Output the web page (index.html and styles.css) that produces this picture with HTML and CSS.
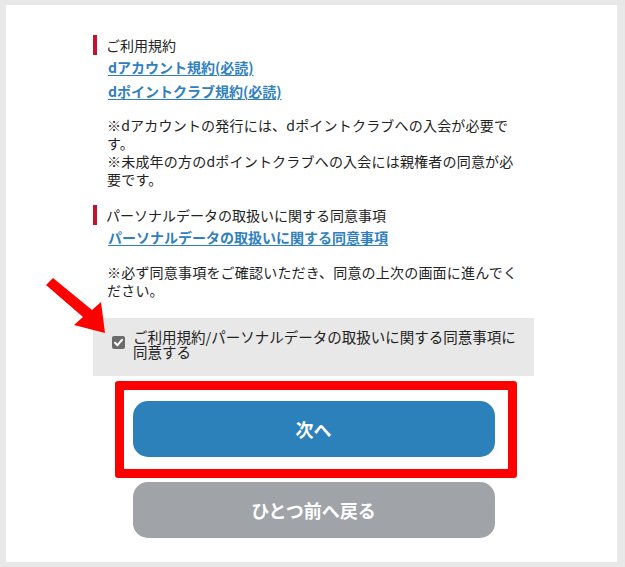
FILE: index.html
```html
<!DOCTYPE html>
<html lang="ja">
<head>
  <meta charset="UTF-8" />
  <meta name="viewport" content="width=device-width, initial-scale=1.0"/>
  <title>ご利用規約</title>
  <link rel="stylesheet" href="styles.css">
</head>
<body>

  <div class="card">
    <div class="content">
      <div class="section">
        <h3 class="heading">ご利用規約</h3>
        <div class="links">
          <a href="#">dアカウント規約(必読)</a>
          <a href="#">dポイントクラブ規約(必読)</a>
        </div>
        <p class="note">※dアカウントの発行には、dポイントクラブへの入会が必要で<br>す。<br>※未成年の方のdポイントクラブへの入会には親権者の同意が必<br>要です。</p>
      </div>

      <div class="section">
        <h3 class="heading">パーソナルデータの取扱いに関する同意事項</h3>
        <div class="links">
          <a href="#">パーソナルデータの取扱いに関する同意事項</a>
        </div>
        <p class="note note-last">※必ず同意事項をご確認いただき、同意の上次の画面に進んでく<br>ださい。</p>
      </div>

      <label class="agree">
        <span class="check">
          <svg width="13" height="13" viewBox="0 0 13 13">
            <rect x="0" y="0" width="13" height="13" rx="2" fill="#6b6b6b"/>
            <path d="M3 6.8 L5.5 9.2 L10 3.8" fill="none" stroke="#fff" stroke-width="2" stroke-linecap="round" stroke-linejoin="round"/>
          </svg>
        </span>
        <span class="agree-text">ご利用規約/パーソナルデータの取扱いに関する同意事項に<br>同意する</span>
      </label>

      <div class="actions">
        <button class="btn btn-next">次へ<span class="highlight"></span></button>
        <button class="btn btn-back">ひとつ前へ戻る</button>
      </div>
    </div>

    <!-- annotation arrow -->
    <svg class="arrow" width="62" height="60" viewBox="46 276 62 60">
      <polygon points="53,278 92,310 101,302 105,333 74,325 83,317 46,285" fill="#f00"/>
    </svg>
  </div>

</body>
</html>
```

FILE: styles.css
```css
* {
  box-sizing: border-box;
  margin: 0;
  padding: 0;
}

body {
  font-family: "Noto Sans CJK JP", "Noto Sans", sans-serif;
  background: #e8e8e8;
  color: #222;
  padding: 5px 8px 5px 6px;
}

.card {
  position: relative;
  background: #fff;
  height: 557px;
  padding-top: 30px;
}

.content {
  width: 441px;
  margin-left: 87px;
}

.section + .section {
  margin-top: 17px;
}

.heading {
  border-left: 4px solid #c4122f;
  padding-left: 9px;
  font-size: 14px;
  font-weight: normal;
  line-height: 20px;
  color: #222;
}

.links {
  padding-left: 15px;
}

.links a {
  display: block;
  width: fit-content;
  font-size: 14px;
  font-weight: bold;
  line-height: 24px;
  color: #2f80bf;
  text-decoration: underline;
  text-underline-offset: 2px;
}

.note {
  padding-left: 14px;
  margin-top: 13px;
  font-size: 14px;
  letter-spacing: 0.2px;
  line-height: 18px;
  white-space: nowrap;
}

.note-last {
  margin-top: 14px;
}

.agree {
  display: flex;
  align-items: flex-start;
  gap: 8px;
  margin-top: 19px;
  height: 58px;
  padding: 11px 10px 0 19px;
  background: #e8e8e8;
}

.check {
  display: flex;
  margin-top: 7px;
}

.agree-text {
  font-size: 14.5px;
  line-height: 15px;
  white-space: nowrap;
}

.actions {
  display: flex;
  flex-direction: column;
  align-items: center;
  gap: 25px;
  margin-top: 25px;
}

.btn {
  width: 362px;
  height: 56px;
  border: none;
  border-radius: 15px;
  color: #fff;
  font-family: inherit;
  font-size: 18px;
  font-weight: bold;
  display: flex;
  align-items: center;
  justify-content: center;
  cursor: pointer;
}

.btn-next {
  position: relative;
  background: #2c81bb;
}

.highlight {
  position: absolute;
  top: -20px;
  left: -18px;
  right: -22px;
  bottom: -21px;
  border: 9px solid #f00;
  border-radius: 3px;
}

.btn-back {
  background: #a0a4a8;
}

.arrow {
  position: absolute;
  left: 40px;
  top: 271px;
}
```
